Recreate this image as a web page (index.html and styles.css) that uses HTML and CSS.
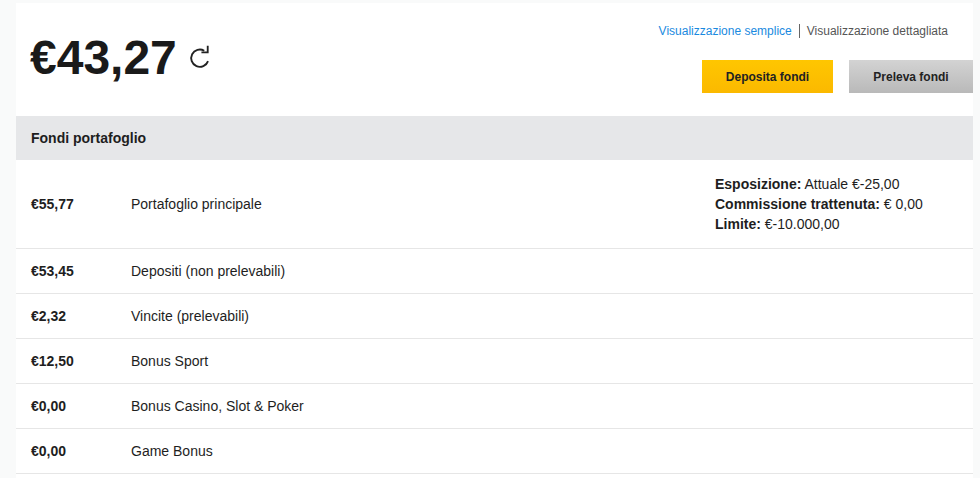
FILE: index.html
```html
<!DOCTYPE html>
<html lang="it">
<head>
    <meta charset="UTF-8">
    <title>Portafoglio</title>
    <link rel="stylesheet" href="styles.css">
</head>
<body>
    <div class="panel">
        <!-- saldo e azioni -->
        <div class="top">
            <div class="balance">
                <span class="balance-amount">€43,27</span>
                <svg class="refresh" width="24" height="26" viewBox="0 0 22 24">
                    <path d="M14 7.1 A8 8 0 1 0 17.5 16.7" fill="none" stroke="#222" stroke-width="1.7"/>
                    <path d="M17.2 2.5 V8.6 H11.4" fill="none" stroke="#222" stroke-width="1.7"/>
                </svg>
            </div>
            <div class="actions">
                <div class="views">
                    <a href="#" class="view-link">Visualizzazione semplice</a>
                    <span class="view-sep"></span>
                    <span class="view-current">Visualizzazione dettagliata</span>
                </div>
                <div class="buttons">
                    <button class="btn btn-deposit">Deposita fondi</button>
                    <button class="btn btn-withdraw">Preleva fondi</button>
                </div>
            </div>
        </div>

        <div class="funds-head">Fondi portafoglio</div>

        <div class="fund-row main-row">
            <div class="fund-amount">€55,77</div>
            <div class="fund-label">Portafoglio principale</div>
            <div class="fund-info">
                <div><b>Esposizione:</b> Attuale €-25,00</div>
                <div><b>Commissione trattenuta:</b> € 0,00</div>
                <div><b>Limite:</b> €-10.000,00</div>
            </div>
        </div>
        <div class="fund-row">
            <div class="fund-amount">€53,45</div>
            <div class="fund-label">Depositi (non prelevabili)</div>
        </div>
        <div class="fund-row">
            <div class="fund-amount">€2,32</div>
            <div class="fund-label">Vincite (prelevabili)</div>
        </div>
        <div class="fund-row">
            <div class="fund-amount">€12,50</div>
            <div class="fund-label">Bonus Sport</div>
        </div>
        <div class="fund-row">
            <div class="fund-amount">€0,00</div>
            <div class="fund-label">Bonus Casino, Slot &amp; Poker</div>
        </div>
        <div class="fund-row">
            <div class="fund-amount">€0,00</div>
            <div class="fund-label">Game Bonus</div>
        </div>
    </div>
</body>
</html>
```

FILE: styles.css
```css
body {
    margin: 0;
    padding: 3px 7px 0 16px;
    background-color: #f9fafa;
    font-family: "Liberation Sans", Arial, sans-serif;
    color: #1e1e1e;
}
.panel {
    background-color: #fff;
    min-height: 475px;
}
.top {
    display: flex;
    justify-content: space-between;
    height: 113px;
}
.balance {
    display: flex;
    align-items: flex-start;
    padding: 31px 0 0 14px;
}
.balance-amount {
    font-size: 48px;
    line-height: 48px;
    font-weight: bold;
    color: #1a1a1a;
}
.refresh {
    margin: 9px 0 0 12px;
}
.actions {
    display: flex;
    flex-direction: column;
    align-items: flex-end;
    padding-top: 20px;
}
.views {
    display: flex;
    align-items: center;
    font-size: 12px;
    line-height: 16px;
    padding-right: 25px;
}
.view-link {
    color: #1a8ae0;
    text-decoration: none;
}
.view-sep {
    width: 1px;
    height: 14px;
    background-color: #666;
    margin: 0 7px 0 7px;
}
.view-current {
    color: #555;
}
.buttons {
    display: flex;
    gap: 16px;
    margin-top: 21px;
}
.btn {
    height: 33px;
    border: none;
    font-family: "Liberation Sans", Arial, sans-serif;
    font-size: 12px;
    font-weight: bold;
    color: #222;
    padding: 0;
}
.btn-deposit {
    width: 131px;
    background: linear-gradient(#ffc600, #fbb900);
}
.btn-withdraw {
    width: 124px;
    background: linear-gradient(#d3d3d3, #b9b9b9);
}
.funds-head {
    height: 44px;
    line-height: 44px;
    background-color: #e6e7e9;
    padding-left: 15px;
    font-size: 14px;
    font-weight: bold;
}
.fund-row {
    display: grid;
    grid-template-columns: 100px 584px 1fr;
    align-items: center;
    height: 44px;
    padding-left: 15px;
    border-bottom: 1px solid #e6e6e6;
    font-size: 14px;
}
.main-row {
    height: 88px;
}
.fund-amount {
    font-weight: bold;
}
.fund-info {
    line-height: 20px;
}
```
